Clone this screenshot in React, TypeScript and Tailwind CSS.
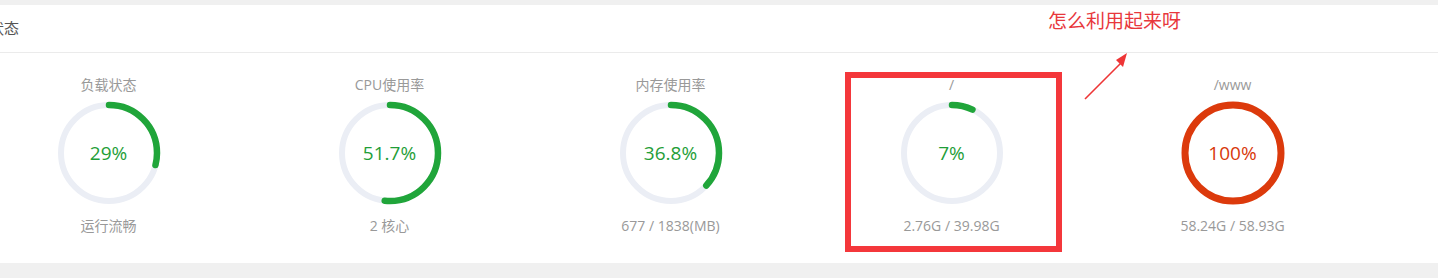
const gauges = [
  { label: "负载状态", value: 29, text: "29%", sub: "运行流畅" },
  { label: "CPU使用率", value: 51.7, text: "51.7%", sub: "2 核心" },
  { label: "内存使用率", value: 36.8, text: "36.8%", sub: "677 / 1838(MB)" },
  { label: "/", value: 7, text: "7%", sub: "2.76G / 39.98G", marked: true },
  { label: "/www", value: 100, text: "100%", sub: "58.24G / 58.93G" },
];

function Gauge({ value, text }: { value: number; text: string }) {
  const r = 48;
  const c = 2 * Math.PI * r;
  const full = value >= 100;
  const color = full ? "#dc3a0c" : "#20a53a";
  return (
    <div className="relative w-[104px] h-[104px]">
      <svg width="104" height="104" viewBox="0 0 104 104" className="-rotate-90">
        <circle cx="52" cy="52" r={r} fill="none" stroke="#ebeef5" strokeWidth="6" />
        <circle
          cx="52"
          cy="52"
          r={r}
          fill="none"
          stroke={color}
          strokeWidth={full ? 7 : 6.5}
          strokeLinecap={full ? "butt" : "round"}
          strokeDasharray={`${(c * value) / 100} ${c}`}
        />
      </svg>
      <div
        className={`absolute inset-0 flex items-center justify-center text-[19px] ${
          full ? "text-[#d8380b]" : "text-[#1f9e38]"
        }`}
      >
        {text}
      </div>
    </div>
  );
}

export default function App() {
  return (
    <div
      className="w-[1438px] h-[278px] overflow-hidden bg-[#f0f0f0] pt-[5px]"
      style={{ fontFamily: '"Open Sans", "Noto Sans CJK SC", sans-serif' }}
    >
      <div className="relative -ml-[32px] w-[1520px] bg-white">
        <div className="h-[48px] flex items-center pl-[21px] border-b border-[#ebebeb] text-[15px] text-[#555]">
          状态
        </div>

        <div className="flex pt-[22px] pb-[27px]">
          {gauges.map((g) => (
            <div key={g.label} className="relative w-[281px] flex flex-col items-center">
              <div className="h-[20px] leading-[20px] text-[14px] text-[#999]">{g.label}</div>
              <div className="mt-[6px]">
                <Gauge value={g.value} text={g.text} />
              </div>
              <div className="mt-[11px] h-[20px] leading-[20px] text-[14px] text-[#999]">{g.sub}</div>
              {g.marked && (
                <div className="absolute left-[34px] top-[-3px] w-[217px] h-[180px] border-[6px] border-[#f4373b]" />
              )}
            </div>
          ))}
        </div>

        <div className="absolute left-[1080px] top-[4px] text-[19px] leading-[24px] text-[#e8373c]">
          怎么利用起来呀
        </div>
        <svg
          className="absolute left-[1112px] top-[43px]"
          width="54"
          height="54"
          viewBox="0 0 54 54"
        >
          <line x1="5" y1="51" x2="42" y2="14" stroke="#ee3536" strokeWidth="1.6" />
          <polygon points="47,5 36,12 43,19" fill="#ee3536" />
        </svg>
      </div>
    </div>
  );
}
